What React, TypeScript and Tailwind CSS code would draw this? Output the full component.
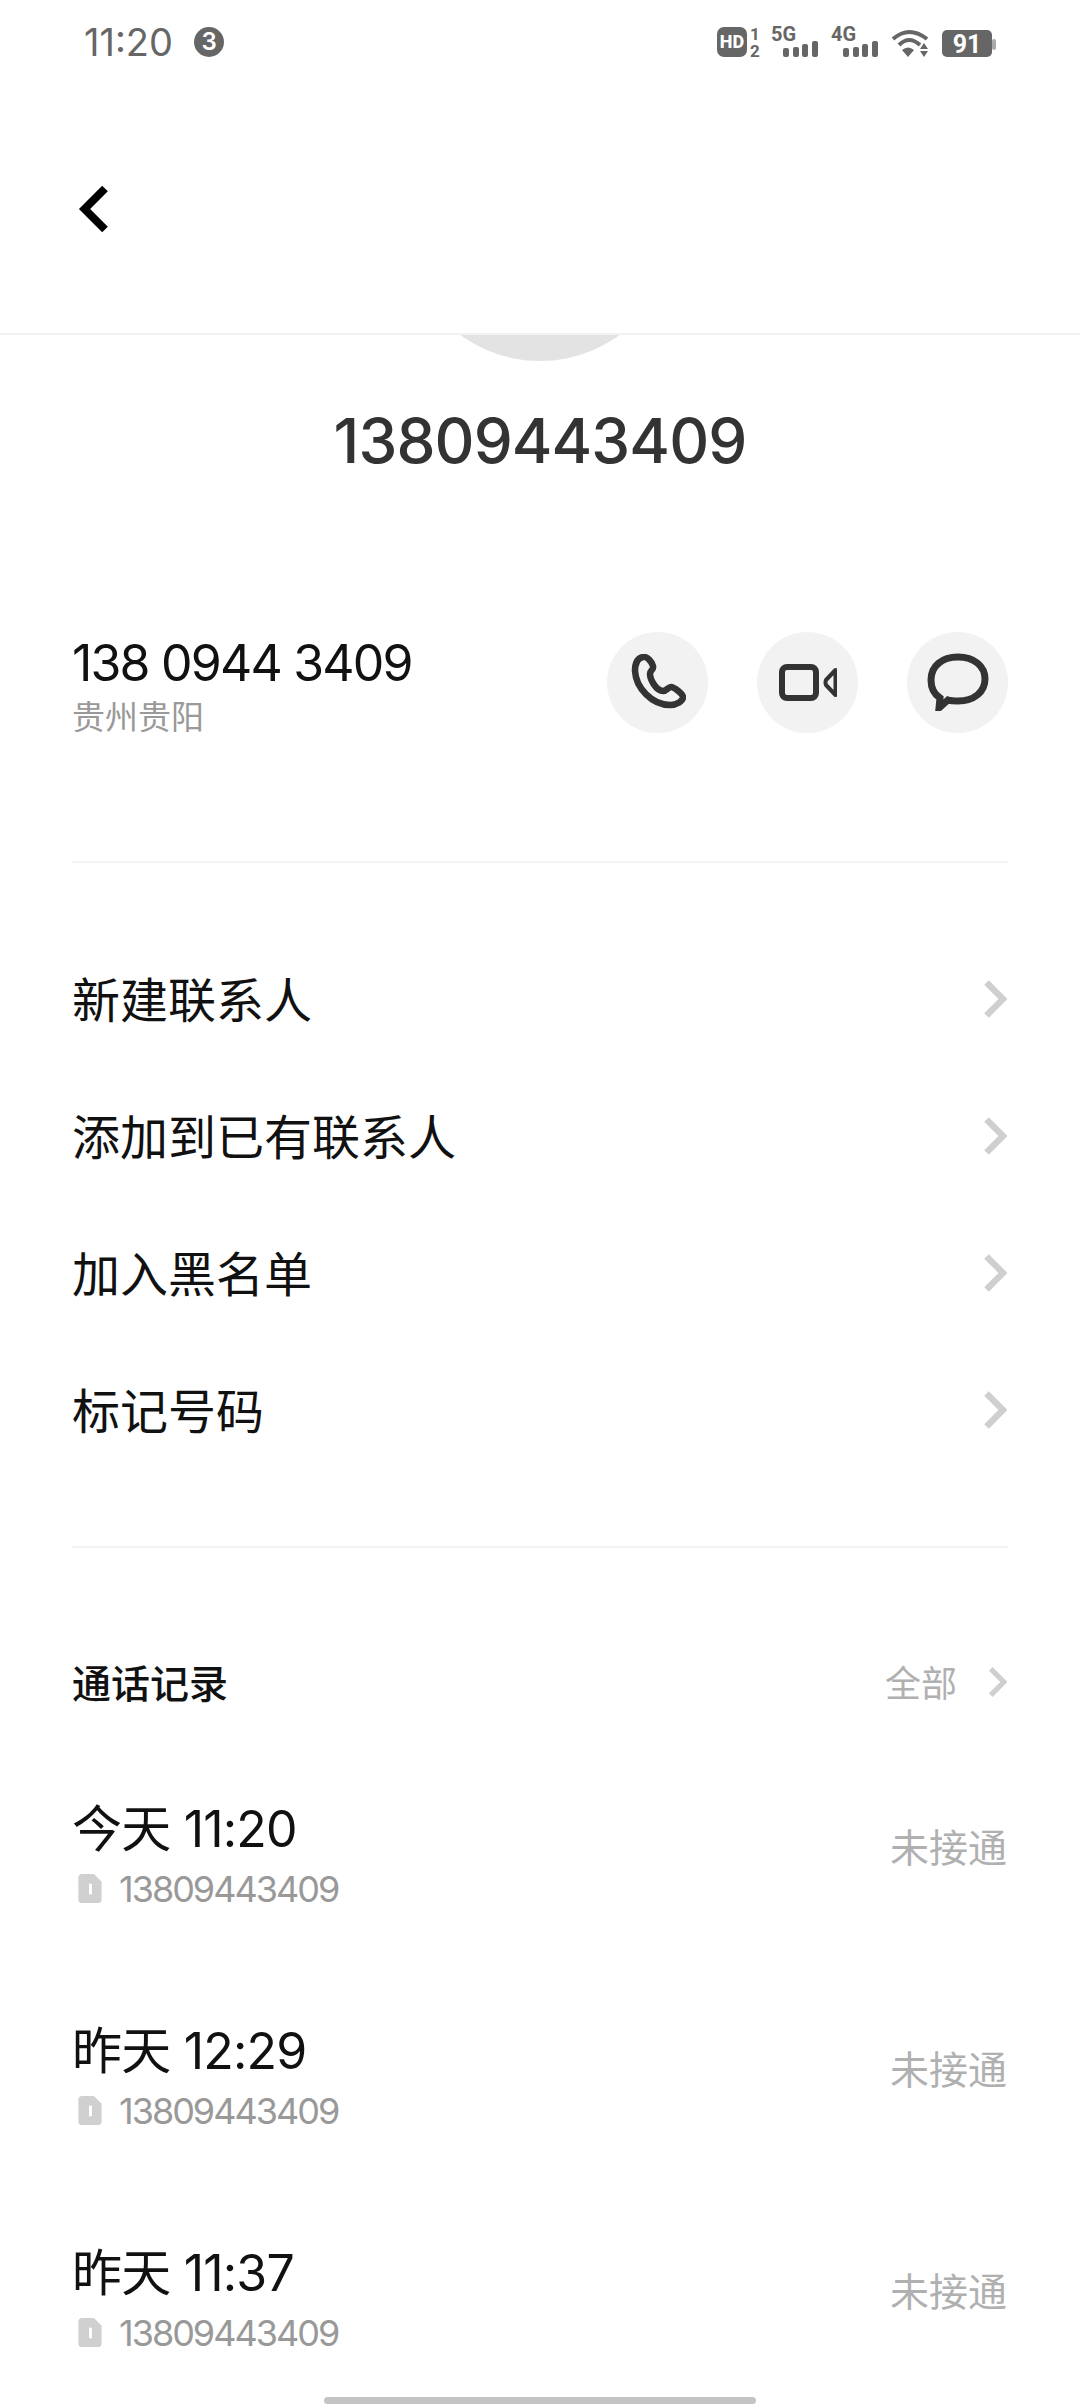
const sans = "font-['Inter','Noto_Sans_CJK_SC',sans-serif]"

function StatusIcons() {
    return (
        <svg width="282" height="40" viewBox="0 0 282 40">
            {/* HD 1 2 */}
            <rect x="0" y="5" width="30" height="30" rx="7" fill="#666" />
            <text x="15" y="26" textAnchor="middle" fontSize="18" fontWeight="800" fill="#fff" fontFamily="Roboto">HD</text>
            <text x="38" y="18" textAnchor="middle" fontSize="17" fontWeight="700" fill="#666" fontFamily="Roboto">1</text>
            <text x="38" y="35" textAnchor="middle" fontSize="17" fontWeight="700" fill="#666" fontFamily="Roboto">2</text>
            {/* 5G */}
            <text x="54" y="19" fontSize="20" fontWeight="700" fill="#666" fontFamily="Roboto">5G</text>
            <rect x="66" y="26" width="6" height="9" rx="2" fill="#666" />
            <rect x="76" y="25" width="6" height="10" rx="2" fill="#666" />
            <rect x="85" y="22" width="6" height="13" rx="2" fill="#666" />
            <rect x="95" y="19" width="6" height="16" rx="2" fill="#666" />
            {/* 4G */}
            <text x="114" y="19" fontSize="20" fontWeight="700" fill="#666" fontFamily="Roboto">4G</text>
            <rect x="126" y="26" width="6" height="9" rx="2" fill="#666" />
            <rect x="136" y="25" width="6" height="10" rx="2" fill="#666" />
            <rect x="145" y="22" width="6" height="13" rx="2" fill="#666" />
            <rect x="155" y="19" width="6" height="16" rx="2" fill="#666" />
            {/* wifi */}
            <path d="M176 17 Q192 3 210 17" fill="none" stroke="#666" strokeWidth="4" />
            <path d="M182 23 Q192 13 203 23" fill="none" stroke="#666" strokeWidth="4" />
            <path d="M185 28 Q191 23 197 28 L191 35 Z" fill="#666" />
            <path d="M203 27 L207 21 L211 27 Z M203 29 L211 29 L207 35 Z" fill="#666" />
            {/* battery */}
            <rect x="225" y="8" width="50" height="27" rx="5" fill="#666" />
            <rect x="275" y="17" width="4" height="11" rx="2" fill="#aaa" />
            <text x="250" y="31" textAnchor="middle" fontSize="25" fontWeight="700" fill="#fff" fontFamily="Roboto">91</text>
        </svg>
    )
}

function Chevron({ small }: { small?: boolean }) {
    return (
        <svg viewBox="0 0 24 40" className={small ? "w-[19px] h-[32px] shrink-0" : "w-[24px] h-[40px] shrink-0"}>
            <path d="M3.5 3.5 L20 20 L3.5 36.5" fill="none" stroke="#cfcfcf" strokeWidth="6.5" />
        </svg>
    )
}

function CircleButton({ children }: { children: React.ReactNode }) {
    return (
        <div className="size-[101px] rounded-full bg-[#f2f2f2] flex items-center justify-center">
            {children}
        </div>
    )
}

function MenuRow({ label }: { label: string }) {
    return (
        <div className="h-[137px] flex items-center justify-between">
            <span className="text-[48px] leading-none text-[#111]">{label}</span>
            <div className="mr-[1px] mb-[4px]">
                <Chevron />
            </div>
        </div>
    )
}

function CallRow({ when }: { when: string }) {
    return (
        <div className="h-[222px] flex items-center justify-between">
            <div className="flex flex-col mt-[13px]">
                <span className="text-[50px] leading-[60px] tracking-[-0.8px] text-[#111]">{when}</span>
                <div className="flex items-center mt-[10px] h-[40px]">
                    <svg width="24" height="29" viewBox="0 0 24 30" className="ml-[6px]">
                        <path d="M4 0 H16 L24 8 V26 a4 4 0 0 1 -4 4 H4 a4 4 0 0 1 -4 -4 V4 a4 4 0 0 1 4 -4 Z" fill="#d0d0d0" />
                        <rect x="11" y="10" width="3" height="11" fill="#fff" />
                    </svg>
                    <span className="ml-[17px] text-[36px] leading-none tracking-[-2px] text-[#999]">13809443409</span>
                </div>
            </div>
            <span className="text-[39px] leading-none text-[#b0b0b0] mr-[1px]">未接通</span>
        </div>
    )
}

export default function App() {
    return (
        <div className={`w-[1080px] h-[2408px] bg-white overflow-hidden flex flex-col ${sans}`}>
            {/* header */}
            <header className="h-[335px] shrink-0 border-b-2 border-[#f2f2f2] flex flex-col">
                <div className="h-[84px] pl-[84px] pr-[81px] flex items-center justify-between">
                    <div className="flex items-center">
                        <span className="text-[38px] leading-none text-[#666]">11:20</span>
                        <span className="ml-[21px] size-[30px] rounded-full bg-[#666] text-white text-[24px] font-semibold leading-none flex items-center justify-center">3</span>
                    </div>
                    <StatusIcons />
                </div>
                <div className="pl-[78px] pt-[100px]">
                    <svg width="32" height="50" viewBox="0 0 32 50">
                        <path d="M27 4.5 L6.6 25 L27 45.5" fill="none" stroke="#000" strokeWidth="8" />
                    </svg>
                </div>
            </header>

            <main className="relative flex-1 px-[72px] overflow-hidden">
                {/* avatar, scrolled under the header */}
                <div className="absolute left-1/2 -translate-x-1/2 top-[-244px] size-[270px] rounded-full bg-[#e3e3e3]" />

                <h1 className="mt-[67px] text-center text-[62px] leading-[78px] tracking-[-0.9px] font-medium text-[#333]">13809443409</h1>

                <div className="mt-[147px] flex items-center justify-between">
                    <div className="flex flex-col mt-[8px]">
                        <span className="text-[50px] leading-[56px] tracking-[-1.8px] text-[#111]">138 0944 3409</span>
                        <span className="text-[33px] leading-[40px] text-[#999] mt-[6px]">贵州贵阳</span>
                    </div>
                    <div className="flex gap-[49px]">
                        <CircleButton>
                            <svg width="56" height="56" viewBox="0 0 56 56">
                                <path d="M13 3 C8 4 5 9 5 17 C6 34 22 51 40 51 C47 51 53 47 53 43 C53 40 44 33 41 33 C38 33 37 37 33 37 C26 37 20 25 20 20 C20 16 24 16 23 12 C22 8 17 2 13 3 Z" fill="none" stroke="#333" strokeWidth="6.5" strokeLinejoin="round" />
                            </svg>
                        </CircleButton>
                        <CircleButton>
                            <svg width="58" height="37" viewBox="0 0 58 37">
                                <rect x="3" y="3" width="34" height="31" rx="5" fill="none" stroke="#333" strokeWidth="6" />
                                <path d="M56.5 6 L47 16 Q46 18.5 47 21 L56.5 31 Z" fill="none" stroke="#333" strokeWidth="4" strokeLinejoin="round" />
                            </svg>
                        </CircleButton>
                        <CircleButton>
                            <svg width="62" height="58" viewBox="0 0 62 58">
                                <path d="M12 55 L13 45 C7 41 4 35 4 27 C4 13 15 4 31 4 C47 4 58 13 58 26 C58 39 47 48 31 48 C27 48 24 48 21 47 Z" fill="none" stroke="#333" strokeWidth="7" />
                            </svg>
                        </CircleButton>
                    </div>
                </div>

                <div className="mt-[124px] h-[2px] bg-[#f4f4f4]" />

                <div className="mt-[69px] flex flex-col">
                    <MenuRow label="新建联系人" />
                    <MenuRow label="添加到已有联系人" />
                    <MenuRow label="加入黑名单" />
                    <MenuRow label="标记号码" />
                </div>

                <div className="mt-[66px] h-[2px] bg-[#f4f4f4]" />

                <div className="mt-[114px] flex items-center justify-between">
                    <span className="text-[39px] leading-[44px] font-medium text-[#111]">通话记录</span>
                    <div className="flex items-center mr-[1px]">
                        <span className="text-[36px] leading-none text-[#b0b0b0]">全部</span>
                        <div className="ml-[31px] mb-[4px]">
                            <Chevron small />
                        </div>
                    </div>
                </div>

                <div className="mt-[30px] flex flex-col">
                    <CallRow when="今天 11:20" />
                    <CallRow when="昨天 12:29" />
                    <CallRow when="昨天 11:37" />
                </div>

                {/* home indicator */}
                <div className="absolute bottom-[4px] left-1/2 -translate-x-1/2 w-[432px] h-[7px] rounded-full bg-[#c4c4c4]" />
            </main>
        </div>
    )
}
